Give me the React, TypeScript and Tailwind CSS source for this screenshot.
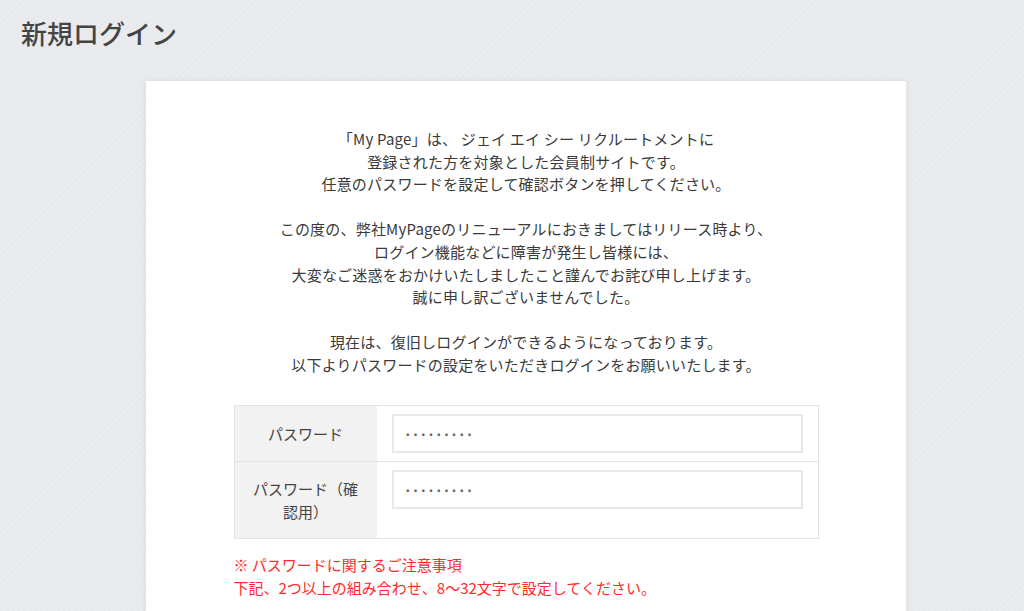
import React from 'react'

const font = { fontFamily: '"Noto Sans CJK JP", "Liberation Sans", sans-serif' }

function PasswordBox() {
  return (
    <div className="h-[39px] w-[411px] border-2 border-[#e8e8e8] bg-white flex items-center pl-[12px] pt-[3px]">
      <span className="font-['Liberation_Sans',sans-serif] text-[16px] font-bold text-[#666] tracking-[2.4px]">·········</span>
    </div>
  )
}

export default function App() {
  return (
    <div
      className="h-[611px] overflow-hidden bg-[repeating-linear-gradient(135deg,#e8e9ec_0px,#e8e9ec_2px,#ebecef_2px,#ebecef_4px)]"
      style={font}
    >
      <h1 className="pt-[13px] pl-[21px] text-[26px] leading-[40px] text-[#444] font-medium">新規ログイン</h1>

      <div className="mt-[28px] ml-[146px] w-[760px] h-[600px] bg-white shadow-[0_0_6px_rgba(0,0,0,0.08)] pt-[47px]">
        <div className="text-center text-[15px] leading-[22.6px] text-[#3a3a3a] tracking-[0.2px]">
          <p>「My Page」は、 ジェイ エイ シー リクルートメントに</p>
          <p>登録された方を対象とした会員制サイトです。</p>
          <p>任意のパスワードを設定して確認ボタンを押してください。</p>
          <br />
          <p>この度の、弊社MyPageのリニューアルにおきましてはリリース時より、</p>
          <p>ログイン機能などに障害が発生し皆様には、</p>
          <p>大変なご迷惑をおかけいたしましたこと謹んでお詫び申し上げます。</p>
          <p>誠に申し訳ございませんでした。</p>
          <br />
          <p>現在は、復旧しログインができるようになっております。</p>
          <p>以下よりパスワードの設定をいただきログインをお願いいたします。</p>
        </div>

        {/* Password form */}
        <div className="mx-auto mt-[28px] w-[585px] border border-[#e3e3e3]">
          <div className="grid grid-cols-[142px_1fr] border-b border-[#e3e3e3]">
            <div className="bg-[#f2f2f2] flex items-center justify-center px-[16px] py-[15px] text-[15px] leading-[23px] text-[#444]">
              パスワード
            </div>
            <div className="pl-[15px] pt-[8px] pb-[8px]">
              <PasswordBox />
            </div>
          </div>
          <div className="grid grid-cols-[142px_1fr]">
            <div className="bg-[#f2f2f2] flex items-center justify-center px-[16px] py-[15px] text-[15px] leading-[23px] text-[#444] text-center">
              パスワード（確認用）
            </div>
            <div className="pl-[15px] pt-[8px]">
              <PasswordBox />
            </div>
          </div>
        </div>

        <div className="mx-auto mt-[14px] w-[585px] text-[15px] leading-[23px] text-[#ff2b2b]">
          <p>※ パスワードに関するご注意事項</p>
          <p>下記、2つ以上の組み合わせ、8〜32文字で設定してください。</p>
        </div>
      </div>
    </div>
  )
}
